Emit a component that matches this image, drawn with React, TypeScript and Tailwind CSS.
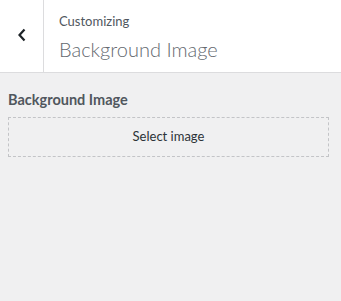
import React from "react";

export default function App() {
  return (
    <div
      className="w-[341px] h-[301px] bg-[#f0f0f1] flex flex-col overflow-hidden"
      style={{ fontFamily: 'Lato, "Noto Sans", sans-serif' }}
    >
      <div className="h-[73px] bg-white border-b border-[#dcdcde] flex shrink-0">
        <div className="w-[44px] border-r border-[#dcdcde] flex items-center justify-center">
          <svg width="10" height="14" viewBox="0 0 10 14" className="mt-[-2px]">
            <path d="M7.5 1.5 L2.5 7 L7.5 12.5" stroke="#1d2327" strokeWidth="2.2" fill="none" />
          </svg>
        </div>
        <div className="flex flex-col pl-[15px] pt-[12px]">
          <span className="text-[13px] leading-[18px] text-[#50575e]">Customizing</span>
          <span className="text-[20px] leading-[28px] text-[#646970] font-light mt-[5px]">Background Image</span>
        </div>
      </div>
      <div className="pl-[8px] pr-[12px] pt-[17px]">
        <div className="text-[14.5px] leading-[20px] font-bold text-[#50575e]">Background Image</div>
        <div className="mt-[7px] h-[40px] border border-dashed border-[#c3c4c7] flex items-center justify-center text-[13px] text-[#2c3338]">
          Select image
        </div>
      </div>
    </div>
  );
}
